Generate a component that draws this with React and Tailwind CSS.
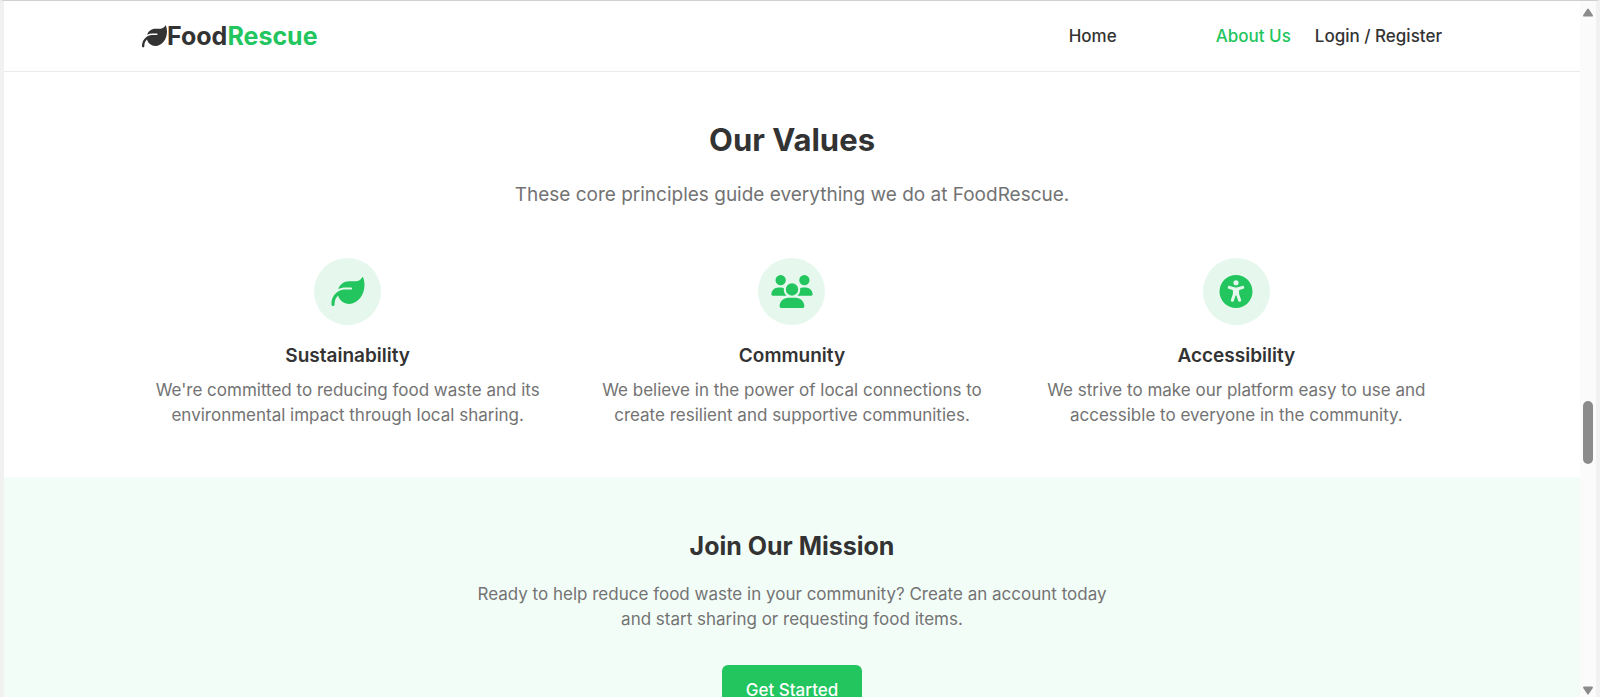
import { FaLeaf, FaUsers, FaUniversalAccess } from "react-icons/fa6";

const values = [
  {
    title: "Sustainability",
    text: "We're committed to reducing food waste and its environmental impact through local sharing.",
    Icon: FaLeaf,
  },
  {
    title: "Community",
    text: "We believe in the power of local connections to create resilient and supportive communities.",
    Icon: FaUsers,
  },
  {
    title: "Accessibility",
    text: "We strive to make our platform easy to use and accessible to everyone in the community.",
    Icon: FaUniversalAccess,
  },
];

function Header() {
  return (
    <header className="border-b border-[#ebebeb] bg-white">
      <div className="mx-auto flex h-[70px] max-w-[1300px] items-center justify-between">
        <a href="#home" className="flex items-center text-[25px] font-bold leading-8">
          <FaLeaf aria-hidden="true" />
          <span>
            Food<span className="text-[#22c55e]">Rescue</span>
          </span>
        </a>
        <nav className="flex items-center gap-6 font-medium">
          <a href="#home" className="mr-[75px]">Home</a>
          <a href="#about" className="text-[#22c55e]">About Us</a>
          <a href="#login">Login / Register</a>
        </nav>
      </div>
    </header>
  );
}

function ValueCard({ title, text, Icon }) {
  return (
    <article className="flex flex-col items-center px-3">
      <div className="flex size-[67px] items-center justify-center rounded-full bg-[#e6f8ed] text-[#22c55e]">
        <Icon className="h-[33px] w-[42px]" aria-hidden="true" />
      </div>
      <h3 className="mt-[17px] text-[19px] font-semibold leading-7">{title}</h3>
      <p className="mt-2 text-[#737373]">{text}</p>
    </article>
  );
}

function Scrollbar() {
  return (
    <div className="flex w-4 shrink-0 flex-col items-center bg-[#fbfbfb] pt-[7px] pb-0.5" aria-hidden="true">
      <svg width="10" height="9" viewBox="0 0 10 9" fill="#8b8b8b">
        <path d="M4.2 1Q5 0 5.8 1L9.8 7Q10.2 8.5 9 8.5H1Q-.2 8.5 .2 7Z" />
      </svg>
      <div className="flex-[385]" />
      <div className="h-[63px] w-[10px] rounded-full bg-[#8b8b8b]" />
      <div className="flex-[222]" />
      <svg width="10" height="9" viewBox="0 0 10 9" fill="#8b8b8b">
        <path d="M4.2 8Q5 9 5.8 8L9.8 2Q10.2 .5 9 .5H1Q-.2 .5 .2 2Z" />
      </svg>
    </div>
  );
}

export default function App() {
  return (
    <div className="flex h-screen overflow-hidden border-t border-r-4 border-l-4 border-t-[#cfcfcf] border-r-[#f1f1f1] border-l-[#f1f1f1] bg-white font-[Inter,sans-serif] text-[17px] leading-[25px] text-[#333333]">
      <div className="min-w-0 flex-1 overflow-hidden">
        <Header />
        <main>
          <section className="mx-auto max-w-[1300px] pt-12 pb-[49px] text-center">
            <h2 className="text-[31px] font-bold leading-10">Our Values</h2>
            <p className="mt-[21px] text-[19px] leading-7 text-[#737373]">
              These core principles guide everything we do at FoodRescue.
            </p>
            <div className="mt-[49px] grid grid-cols-3 gap-[33px]">
              {values.map((value) => (
                <ValueCard key={value.title} {...value} />
              ))}
            </div>
          </section>
          <section className="bg-[#f3fdf8] px-8 pt-[49px] pb-[49px] text-center">
            <h2 className="text-[25px] font-bold leading-10">Join Our Mission</h2>
            <p className="mx-auto mt-4 max-w-[640px] text-[#737373]">
              Ready to help reduce food waste in your community? Create an account today and start
              sharing or requesting food items.
            </p>
            <a
              href="#register"
              className="mt-[33px] inline-block rounded-md bg-[#22c55e] px-6 py-[13px] font-medium text-white"
            >
              Get Started
            </a>
          </section>
        </main>
      </div>
      <Scrollbar />
    </div>
  );
}
